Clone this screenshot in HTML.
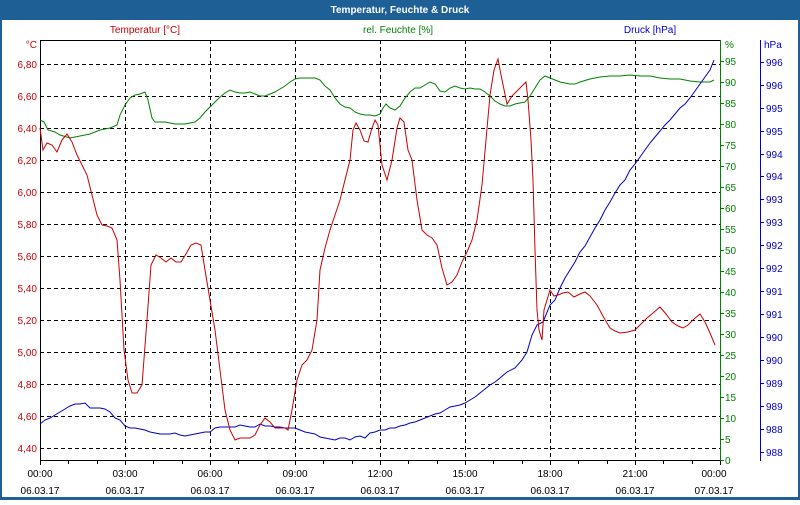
<!DOCTYPE html>
<html><head><meta charset="utf-8"><style>
body{margin:0;width:800px;height:500px;overflow:hidden;background:#fff;font-family:"Liberation Sans",sans-serif}
</style></head><body>
<svg width="800" height="500" xmlns="http://www.w3.org/2000/svg" font-family="Liberation Sans, sans-serif" font-size="10">
<rect x="0" y="0" width="800" height="500" fill="#1e5f96"/>
<rect x="2" y="20" width="796" height="477" fill="#fff"/>
<text x="400" y="13" fill="#fff" font-weight="bold" font-size="10" text-anchor="middle">Temperatur, Feuchte &amp; Druck</text>
<text x="145" y="33" fill="#cc0000" text-anchor="middle">Temperatur [°C]</text>
<text x="398" y="33" fill="#008000" text-anchor="middle">rel. Feuchte [%]</text>
<text x="650" y="33" fill="#0000cc" text-anchor="middle">Druck [hPa]</text>
<g stroke="#000" stroke-dasharray="4,3" stroke-width="1">
<path d="M125.5 40V460M210.5 40V460M295.5 40V460M380.5 40V460M465.5 40V460M550.5 40V460M635.5 40V460"/>
<path d="M40 64.5H720M40 96.5H720M40 128.5H720M40 160.5H720M40 192.5H720M40 224.5H720M40 256.5H720M40 288.5H720M40 320.5H720M40 352.5H720M40 384.5H720M40 416.5H720M40 448.5H720"/>
</g>
<path d="M40.5 40V461M40 460.5H720M40 40.5H720" stroke="#000" fill="none"/>
<path d="M40.5 461v4M68.5 461v3M97.5 461v3M125.5 461v4M153.5 461v3M182.5 461v3M210.5 461v4M238.5 461v3M267.5 461v3M295.5 461v4M323.5 461v3M352.5 461v3M380.5 461v4M408.5 461v3M437.5 461v3M465.5 461v4M493.5 461v3M522.5 461v3M550.5 461v4M578.5 461v3M607.5 461v3M635.5 461v4M663.5 461v3M692.5 461v3M720.5 461v4" stroke="#000"/>
<g fill="#cc0000" text-anchor="end">
<text x="37" y="48">°C</text>
<text x="37" y="68">6,80</text><text x="37" y="100">6,60</text><text x="37" y="132">6,40</text><text x="37" y="164">6,20</text><text x="37" y="196">6,00</text><text x="37" y="228">5,80</text><text x="37" y="260">5,60</text><text x="37" y="292">5,40</text><text x="37" y="324">5,20</text><text x="37" y="356">5,00</text><text x="37" y="388">4,80</text><text x="37" y="420">4,60</text><text x="37" y="452">4,40</text>
</g>
<path d="M720.5 40V461" stroke="#008000"/>
<g stroke="#008000"><path d="M720 61.5h4M720 82.5h4M720 103.5h4M720 124.5h4M720 145.5h4M720 166.5h4M720 187.5h4M720 208.5h4M720 229.5h4M720 250.5h4M720 271.5h4M720 292.5h4M720 313.5h4M720 334.5h4M720 355.5h4M720 376.5h4M720 397.5h4M720 418.5h4M720 439.5h4M720 460.5h4"/></g>
<g fill="#008000">
<text x="725" y="48">%</text>
<text x="725" y="65">95</text><text x="725" y="86">90</text><text x="725" y="107">85</text><text x="725" y="128">80</text><text x="725" y="149">75</text><text x="725" y="170">70</text><text x="725" y="191">65</text><text x="725" y="212">60</text><text x="725" y="233">55</text><text x="725" y="254">50</text><text x="725" y="275">45</text><text x="725" y="296">40</text><text x="725" y="317">35</text><text x="725" y="338">30</text><text x="725" y="359">25</text><text x="725" y="380">20</text><text x="725" y="401">15</text><text x="725" y="422">10</text><text x="725" y="443">5</text><text x="725" y="464">0</text>
</g>
<path d="M760.5 40V461" stroke="#0000cc"/>
<g stroke="#0000cc"><path d="M761 62.5h3M761 85.5h3M761 108.5h3M761 131.5h3M761 154.5h3M761 176.5h3M761 199.5h3M761 222.5h3M761 245.5h3M761 268.5h3M761 291.5h3M761 314.5h3M761 337.5h3M761 360.5h3M761 383.5h3M761 406.5h3M761 429.5h3M761 452.5h3"/></g>
<g fill="#0000cc">
<text x="764" y="48">hPa</text>
<text x="766" y="66">996</text><text x="766" y="89">996</text><text x="766" y="112">995</text><text x="766" y="135">995</text><text x="766" y="158">994</text><text x="766" y="180">994</text><text x="766" y="203">993</text><text x="766" y="226">993</text><text x="766" y="249">992</text><text x="766" y="272">992</text><text x="766" y="295">991</text><text x="766" y="318">991</text><text x="766" y="341">990</text><text x="766" y="364">990</text><text x="766" y="387">989</text><text x="766" y="410">989</text><text x="766" y="433">988</text><text x="766" y="456">988</text>
</g>
<g fill="#000" text-anchor="middle">
<text x="40" y="477">00:00</text><text x="125" y="477">03:00</text><text x="210" y="477">06:00</text><text x="295" y="477">09:00</text><text x="380" y="477">12:00</text><text x="465" y="477">15:00</text><text x="550" y="477">18:00</text><text x="635" y="477">21:00</text><text x="714" y="477">00:00</text>
<text x="40" y="494">06.03.17</text><text x="125" y="494">06.03.17</text><text x="210" y="494">06.03.17</text><text x="295" y="494">06.03.17</text><text x="380" y="494">06.03.17</text><text x="465" y="494">06.03.17</text><text x="550" y="494">06.03.17</text><text x="635" y="494">06.03.17</text><text x="714" y="494">07.03.17</text>
</g>
<polyline fill="none" stroke="#008000" points="40,120 44,122 48,130 55,132 60,135 70,138 80,136 90,134 100,130 110,128 117,125 120,115 125,105 130,98 135,95 140,94 145,92 148,100 152,118 155,122 165,122 175,124 185,124 195,122 200,118 205,112 210,107 215,102 220,97 225,93 230,90 235,92 240,93 245,93 250,92 255,94 260,96 265,96 270,94 275,92 280,89 285,86 290,82 295,79 300,78 305,78 310,78 315,78 320,80 325,86 330,90 335,98 340,104 345,107 350,108 355,112 360,114 365,115 370,115 375,116 380,114 383,108 386,104 390,108 395,110 400,106 405,98 410,92 415,88 420,88 425,85 430,82 435,84 440,91 445,92 450,88 455,86 460,88 465,89 470,88 475,89 480,89 485,92 490,96 495,101 500,104 505,106 510,106 515,104 520,103 525,102 530,96 535,88 540,80 545,76 550,78 555,80 560,82 565,83 570,84 575,84 580,82 590,79 600,77 610,76 620,76 630,75 640,76 650,76 660,78 670,79 680,79 690,81 700,82 710,82 714,80"/>
<polyline fill="none" stroke="#0000cc" points="40,424 45,420 50,418 55,415 60,412 65,409 70,406 75,404 80,404 85,403 88,406 90,408 95,408 100,408 105,409 110,412 115,418 120,420 125,426 130,428 135,428 140,429 145,430 150,432 155,433 160,434 165,434 170,434 175,433 180,435 185,436 190,435 195,434 200,433 205,432 210,432 215,428 220,427 225,427 230,427 235,427 240,425 245,426 250,427 255,427 260,424 265,426 270,426 275,427 280,427 285,428 290,428 295,428 300,430 305,432 310,433 315,434 320,437 325,438 330,439 335,440 340,438 345,438 350,440 355,437 360,436 365,438 370,433 375,432 380,430 385,430 390,428 395,428 400,426 405,425 410,423 415,422 420,420 425,418 430,416 435,414 440,413 445,410 450,407 455,406 460,405 465,403 470,400 475,397 480,393 485,389 490,385 495,382 500,378 507,372 515,368 522,360 527,352 532,335 537,325 543,322 550,305 555,300 560,288 565,278 570,270 575,262 580,252 585,246 590,237 595,228 600,220 605,210 610,202 615,193 620,185 625,180 630,170 635,164 640,157 645,150 650,143 655,137 660,131 665,125 670,120 675,114 680,108 685,104 690,98 695,91 700,84 705,77 710,70 714,60"/>
<polyline fill="none" stroke="#cc0000" points="40,128 43,150 47,143 52,145 57,152 62,140 67,134 72,142 77,155 82,165 87,175 92,195 97,215 102,225 107,226 112,228 117,240 120,280 124,350 128,380 132,393 137,393 142,385 147,320 151,265 156,255 161,258 166,262 171,258 176,262 181,262 186,254 191,245 196,243 201,245 205,270 210,300 215,330 220,370 225,410 230,430 235,440 240,438 245,438 250,438 255,435 260,425 265,418 270,422 275,428 280,428 285,428 288,430 292,410 297,380 302,365 307,360 312,350 317,320 320,270 325,248 330,230 335,215 340,200 345,180 350,160 353,130 356,123 360,130 364,141 368,142 372,128 375,120 378,125 382,165 387,180 392,160 397,128 400,118 404,122 408,150 412,160 417,200 422,230 427,235 432,238 437,245 442,268 447,285 452,282 457,275 462,262 467,252 472,240 477,220 482,185 486,140 490,95 494,70 498,59 501,75 507,104 512,96 516,92 520,88 526,82 528,100 531,140 533,180 535,250 537,310 539,330 542,340 544,310 547,300 550,290 554,296 558,295 563,293 568,292 574,297 580,294 585,292 590,296 597,305 604,318 610,328 615,331 620,333 628,332 635,330 641,324 647,318 653,313 660,307 666,314 672,322 678,326 683,328 688,325 694,319 700,314 705,322 710,333 715,345"/>
</svg>
</body></html>
